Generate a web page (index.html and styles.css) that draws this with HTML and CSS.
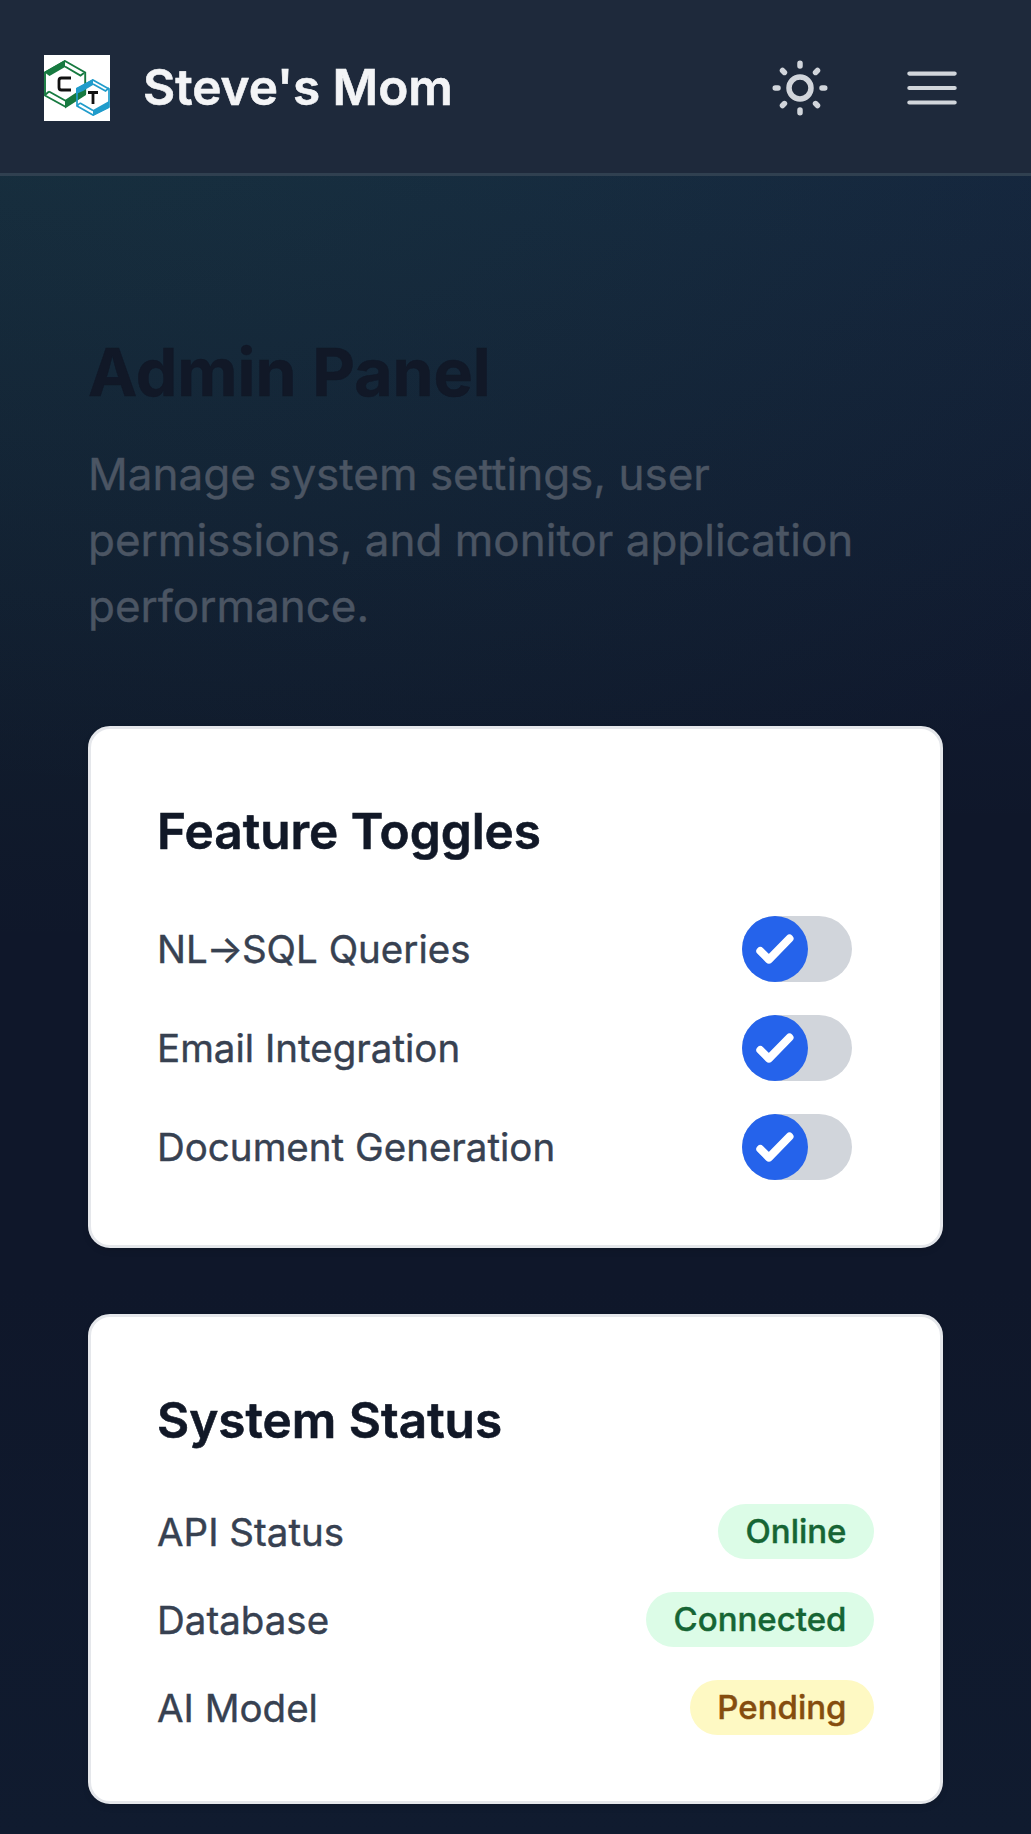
FILE: index.html
```html
<!DOCTYPE html>
<html lang="en">
<head>
<meta charset="utf-8">
<title>Admin Panel</title>
<link rel="stylesheet" href="styles.css">
</head>
<body>
<header class="topbar">
  <svg class="logo" viewBox="0 0 66 66" aria-label="CT">
    <rect width="66" height="66" fill="#fff"/>
    <g fill="none" stroke="#177a40" stroke-width="1.900">
      <path d="M21 6 41.200 17.500V38.500L21 51.500 1 40.500V17.500Z"/>
      <path d="M21 11.500 36.500 20.500 40 18M5 36.500 22 46M5 36.500 1 40"/>
    </g>
    <path fill="#177a40" d="M21 5V12L5.500 21 0 17ZM42 31V40L21 53.500V45Z"/>
    <g fill="none" stroke="#209ccb" stroke-width="1.700">
      <path d="M49 25 65 34V52L49 60 33 51V34Z"/>
      <path d="M49 29 61.500 36 65 33M36 48 49 55.500M36 48 33 51"/>
    </g>
    <path fill="#209ccb" d="M49 24V30L39 36 32 39V33ZM65 46V53L49 61V55Z"/>
    <path fill="none" stroke="#111" stroke-width="2.800" d="M27 23H17.500Q15 23 15 25.500V32.500Q15 35 17.500 35H27"/>
    <path fill="none" stroke="#111" stroke-width="2.800" d="M44 37.500H54M49 37.500V49"/>
  </svg>
  <span class="brand">Steve's Mom</span>
  <nav class="actions">
    <svg class="icon" viewBox="0 0 24 24" stroke-width="2"><path d="M12 3v1m0 16v1m9-9h-1M4 12H3m15.364 6.364l-.707-.707M6.343 6.343l-.707-.707m12.728 0l-.707.707M6.343 17.657l-.707.707M16 12a4 4 0 11-8 0 4 4 0 018 0z"/></svg>
    <svg class="icon" viewBox="0 0 24 24" stroke-width="1.5"><path d="M3.750 6.750h16.500M3.750 12h16.500m-16.500 5.250h16.500"/></svg>
  </nav>
</header>
<main class="content">
  <h1 class="title">Admin Panel</h1>
  <p class="lead">Manage system settings, user permissions, and monitor application performance.</p>
  <div class="cards">
    <section class="card">
      <h2 class="card-title">Feature Toggles</h2>
      <div class="rows">
        <div class="row"><span class="label">NL<span class="arrow">→</span>SQL Queries</span><span class="toggle"><svg class="knob" viewBox="0 0 66 66"><path d="M18.300 35 26.900 43.600 47.500 22.500"/></svg></span></div>
        <div class="row"><span class="label">Email Integration</span><span class="toggle"><svg class="knob" viewBox="0 0 66 66"><path d="M18.300 35 26.900 43.600 47.500 22.500"/></svg></span></div>
        <div class="row"><span class="label">Document Generation</span><span class="toggle"><svg class="knob" viewBox="0 0 66 66"><path d="M18.300 35 26.900 43.600 47.500 22.500"/></svg></span></div>
      </div>
    </section>
    <section class="card">
      <h2 class="card-title">System Status</h2>
      <div class="rows">
        <div class="row"><span class="label">API Status</span><span class="pill ok">Online</span></div>
        <div class="row"><span class="label">Database</span><span class="pill ok">Connected</span></div>
        <div class="row"><span class="label">AI Model</span><span class="pill pending">Pending</span></div>
      </div>
    </section>
  </div>
</main>
</body>
</html>
```
FILE: styles.css
```css
* { box-sizing: border-box; }

body {
  margin: 0;
  min-height: 1834px;
  overflow: hidden;
  font-family: Inter, "Liberation Sans", sans-serif;
  background:
    radial-gradient(ellipse 1500px 1000px at 60px -50px, rgba(60, 185, 110, 0.12), rgba(60, 185, 110, 0)),
    radial-gradient(ellipse 3000px 880px at 930px -50px, rgba(65, 135, 240, 0.12), rgba(65, 135, 240, 0)),
    linear-gradient(#0f172a 70%, #101b2f);
}

.topbar {
  display: flex;
  align-items: center;
  height: 176px;
  padding: 0 66px 0 44px;
  background: #1e293b;
  box-shadow: inset 0 -3px #304050;
}

.logo { width: 66px; height: 66px; }

.brand {
  margin-left: 33px;
  padding-bottom: 1px;
  font-size: 49.5px;
  line-height: 77px;
  font-weight: 600;
  color: #f3f4f6;
  -webkit-text-stroke: 0.6px;
}

.actions { display: flex; gap: 66px; margin-left: auto; }

.icon {
  width: 66px;
  height: 66px;
  fill: none;
  stroke: #d1d5db;
  stroke-linecap: round;
  stroke-linejoin: round;
}

.content { padding: 152px 88px 30px; }

.title {
  margin: 0 0 25px;
  font-size: 66px;
  line-height: 88px;
  font-weight: 700;
  color: #111827;
  -webkit-text-stroke: 0.5px;
}

.lead {
  margin: 0 0 87px;
  font-size: 44px;
  line-height: 66px;
  color: #4b5563;
  -webkit-text-stroke: 0.4px;
}

.cards { display: grid; gap: 66px; }

.card {
  padding: 64.25px 66px 65.5px;
  border: 3px solid #e5e7eb;
  border-radius: 22px;
  background: #fff;
  box-shadow: 0 3px 6px rgba(0, 0, 0, 0.1);
}

.card-title {
  margin: 0 0 45.500px;
  font-size: 49.5px;
  line-height: 77px;
  font-weight: 600;
  color: #111827;
  -webkit-text-stroke: 0.6px;
}

.rows { display: grid; gap: 33px; }

.row {
  display: flex;
  align-items: center;
  justify-content: space-between;
  height: 66px;
  font-size: 38.5px;
  line-height: 55px;
  color: #374151;
}

.row:has(.pill) { height: 55px; }

.label { padding-top: 1px; -webkit-text-stroke: 0.4px; }

.arrow { margin: 0 -1.300px; }

.toggle {
  display: flex;
  width: 110px;
  height: 66px;
  margin-right: 22px;
  border-radius: 33px;
  background: #d1d5db;
}

.knob {
  width: 66px;
  height: 66px;
  border-radius: 50%;
  background: #2563eb;
  fill: none;
  stroke: #fff;
  stroke-width: 8;
  stroke-linecap: round;
  stroke-linejoin: round;
}

.pill {
  padding: 4.5px 27.5px 6.5px;
  border-radius: 28px;
  font-size: 33px;
  line-height: 44px;
  font-weight: 500;
  -webkit-text-stroke: 0.4px;
}

.ok { background: #dcfce7; color: #166534; }
.pending { background: #fef9c3; color: #854d0e; }
```
